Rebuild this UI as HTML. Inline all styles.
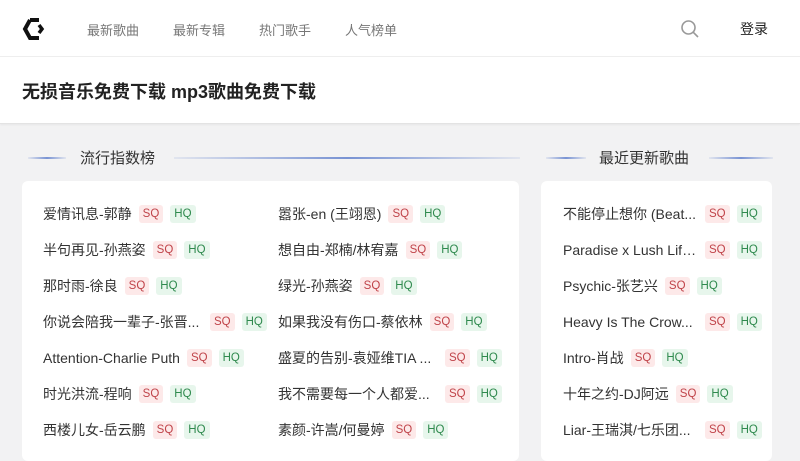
<!DOCTYPE html>
<html><head><meta charset="utf-8"><style>
*{margin:0;padding:0;box-sizing:border-box}
body{width:800px;height:450px;overflow:hidden;background:#f2f2f3;font-family:"Liberation Sans","Noto Sans CJK SC",sans-serif;color:#333}
.hd{position:absolute;left:0;top:0;width:800px;height:57px;background:#fff;border-bottom:1px solid #eee}
.nav{position:absolute;top:20px;font-size:13px;color:#777}
.tb{position:absolute;left:0;top:57px;width:800px;height:67px;background:#fff;border-bottom:1px solid #e3e3e3;box-shadow:0 1px 2px rgba(0,0,0,.05)}
.tb h1{position:absolute;left:22px;top:21px;font-size:18px;font-weight:bold;color:#222}
.st{position:absolute;top:147px;font-size:15px;color:#333}
.ln{position:absolute;top:157px;height:2px;background:linear-gradient(90deg,rgba(80,115,200,.1),rgba(80,115,200,.75),rgba(80,115,200,.1))}
.card{position:absolute;top:181px;background:#fff;border-radius:6px;height:280px}
.it{position:absolute;font-size:14px;color:#333;white-space:nowrap;height:20px;line-height:20px}
.it span.t{display:inline-block;vertical-align:top;overflow:hidden;text-overflow:ellipsis}
.tag{display:inline-block;vertical-align:top;font-size:11.5px;height:18px;line-height:18px;margin-top:1px;padding:0 4px;border-radius:3px;margin-left:7px}
.sq{background:#fde9e9;color:#c0444a}
.hq{background:#e7f6ec;color:#2f8a4e}
</style></head><body>
<div class="hd">
<svg style="position:absolute;left:21px;top:17px" width="26" height="24" viewBox="0 0 26 24"><path d="M9 3 L4 12 L9 21 L18 21" fill="none" stroke="#111" stroke-width="4" stroke-linejoin="miter"/><path d="M9 3 L18 3" fill="none" stroke="#111" stroke-width="4"/><path d="M18 8 L21 12 L18 16" fill="none" stroke="#111" stroke-width="3.5"/></svg>
<div class="nav" style="left:87px">最新歌曲</div>
<div class="nav" style="left:173px">最新专辑</div>
<div class="nav" style="left:259px">热门歌手</div>
<div class="nav" style="left:345px">人气榜单</div>
<svg style="position:absolute;left:680px;top:19px" width="20" height="20" viewBox="0 0 20 20"><circle cx="8.5" cy="8.5" r="6.5" fill="none" stroke="#999" stroke-width="1.6"/><path d="M13.3 13.3 L18 18" stroke="#999" stroke-width="1.6"/></svg>
<div style="position:absolute;left:740px;top:19px;font-size:14px;color:#222">登录</div>
</div>
<div class="tb"><h1>无损音乐免费下载 mp3歌曲免费下载</h1></div>
<div class="ln" style="left:28px;width:38px"></div>
<div class="st" style="left:80px">流行指数榜</div>
<div class="ln" style="left:174px;width:346px"></div>
<div class="ln" style="left:546px;width:40px"></div>
<div class="st" style="left:599px">最近更新歌曲</div>
<div class="ln" style="left:709px;width:64px"></div>
<div class="card" style="left:22px;width:497px"></div>
<div class="card" style="left:541px;width:231px"></div>

<div class="it" style="left:43px;top:204px"><span class="t">爱情讯息-郭静</span><span class="tag sq">SQ</span><span class="tag hq">HQ</span></div>
<div class="it" style="left:43px;top:240px"><span class="t">半句再见-孙燕姿</span><span class="tag sq">SQ</span><span class="tag hq">HQ</span></div>
<div class="it" style="left:43px;top:276px"><span class="t">那时雨-徐良</span><span class="tag sq">SQ</span><span class="tag hq">HQ</span></div>
<div class="it" style="left:43px;top:312px"><span class="t" style="width:160px">你说会陪我一辈子-张晋...</span><span class="tag sq">SQ</span><span class="tag hq">HQ</span></div>
<div class="it" style="left:43px;top:348px"><span class="t">Attention-Charlie Puth</span><span class="tag sq">SQ</span><span class="tag hq">HQ</span></div>
<div class="it" style="left:43px;top:384px"><span class="t">时光洪流-程响</span><span class="tag sq">SQ</span><span class="tag hq">HQ</span></div>
<div class="it" style="left:43px;top:420px"><span class="t">西楼儿女-岳云鹏</span><span class="tag sq">SQ</span><span class="tag hq">HQ</span></div>

<div class="it" style="left:278px;top:204px"><span class="t">嚣张-en (王翊恩)</span><span class="tag sq">SQ</span><span class="tag hq">HQ</span></div>
<div class="it" style="left:278px;top:240px"><span class="t">想自由-郑楠/林宥嘉</span><span class="tag sq">SQ</span><span class="tag hq">HQ</span></div>
<div class="it" style="left:278px;top:276px"><span class="t">绿光-孙燕姿</span><span class="tag sq">SQ</span><span class="tag hq">HQ</span></div>
<div class="it" style="left:278px;top:312px"><span class="t">如果我没有伤口-蔡依林</span><span class="tag sq">SQ</span><span class="tag hq">HQ</span></div>
<div class="it" style="left:278px;top:348px"><span class="t" style="width:160px">盛夏的告别-袁娅维TIA ...</span><span class="tag sq">SQ</span><span class="tag hq">HQ</span></div>
<div class="it" style="left:278px;top:384px"><span class="t" style="width:160px">我不需要每一个人都爱...</span><span class="tag sq">SQ</span><span class="tag hq">HQ</span></div>
<div class="it" style="left:278px;top:420px"><span class="t">素颜-许嵩/何曼婷</span><span class="tag sq">SQ</span><span class="tag hq">HQ</span></div>

<div class="it" style="left:563px;top:204px"><span class="t" style="width:135px">不能停止想你 (Beat...</span><span class="tag sq">SQ</span><span class="tag hq">HQ</span></div>
<div class="it" style="left:563px;top:240px"><span class="t" style="width:135px">Paradise x Lush Life...</span><span class="tag sq">SQ</span><span class="tag hq">HQ</span></div>
<div class="it" style="left:563px;top:276px"><span class="t">Psychic-张艺兴</span><span class="tag sq">SQ</span><span class="tag hq">HQ</span></div>
<div class="it" style="left:563px;top:312px"><span class="t" style="width:135px">Heavy Is The Crow...</span><span class="tag sq">SQ</span><span class="tag hq">HQ</span></div>
<div class="it" style="left:563px;top:348px"><span class="t">Intro-肖战</span><span class="tag sq">SQ</span><span class="tag hq">HQ</span></div>
<div class="it" style="left:563px;top:384px"><span class="t">十年之约-DJ阿远</span><span class="tag sq">SQ</span><span class="tag hq">HQ</span></div>
<div class="it" style="left:563px;top:420px"><span class="t" style="width:135px">Liar-王瑞淇/七乐团...</span><span class="tag sq">SQ</span><span class="tag hq">HQ</span></div>
</body></html>
